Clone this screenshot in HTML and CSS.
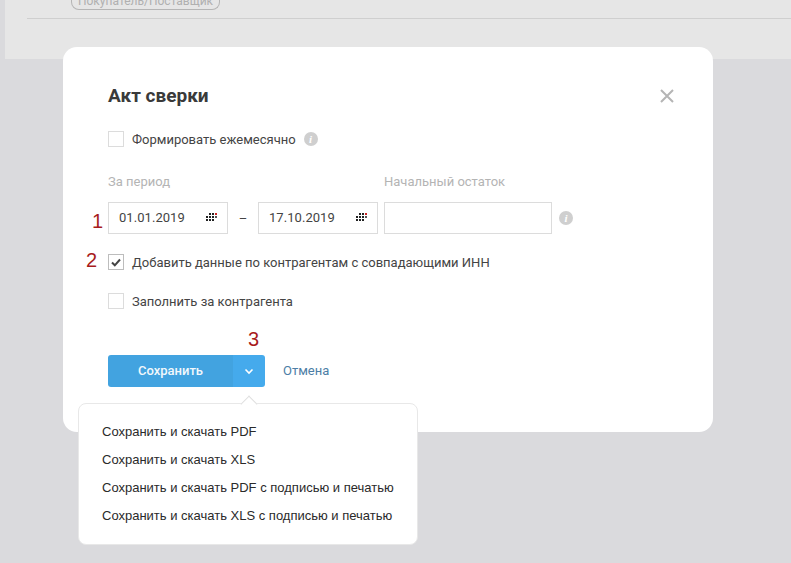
FILE: index.html
```html
<!DOCTYPE html>
<html lang="ru">
<head>
  <meta charset="UTF-8">
  <title>Акт сверки</title>
  <link rel="stylesheet" href="styles.css">
</head>
<body>

  <div class="backdrop">
    <div class="backdrop-row"><span class="pill">Покупатель/Поставщик</span></div>
  </div>

  <div class="modal">
    <h1>Акт сверки</h1>
    <svg class="close" width="14" height="14" viewBox="0 0 14 14"><path d="M1 1l12 12M13 1L1 13" stroke="#b5b5b5" stroke-width="2" fill="none"/></svg>

    <div class="check-row first">
      <span class="checkbox"></span>
      <span>Формировать ежемесячно</span>
      <span class="info">i</span>
    </div>

    <div class="period-labels">
      <span class="period-label">За период</span>
      <span class="period-label">Начальный остаток</span>
    </div>

    <div class="period-row">
      <div class="field date">
        01.01.2019
        <svg class="cal" width="11" height="9" viewBox="0 0 11 9"><path d="M3 0h2v2H3zM6 0h2v2H6zM0 3h2v2H0zM3 3h2v2H3zM6 3h2v2H6zM0 6h2v2H0zM3 6h2v2H3zM6 6h2v2H6z" fill="#222"/><path d="M9 0h2v2H9z" fill="#c22"/><path d="M9 3h2v2H9z" fill="#555"/></svg>
      </div>
      <span class="dash">–</span>
      <div class="field date">
        17.10.2019
        <svg class="cal" width="11" height="9" viewBox="0 0 11 9"><path d="M3 0h2v2H3zM6 0h2v2H6zM0 3h2v2H0zM3 3h2v2H3zM6 3h2v2H6zM0 6h2v2H0zM3 6h2v2H3zM6 6h2v2H6z" fill="#222"/><path d="M9 0h2v2H9z" fill="#c22"/><path d="M9 3h2v2H9z" fill="#555"/></svg>
      </div>
      <div class="field balance"></div>
      <span class="info">i</span>
    </div>

    <div class="check-row inn">
      <span class="checkbox checked">
        <svg width="10" height="9" viewBox="0 0 10 9"><path d="M1 4.5l2.8 2.8L9 1.5" stroke="#444" stroke-width="2" fill="none"/></svg>
      </span>
      <span>Добавить данные по контрагентам с совпадающими ИНН</span>
    </div>

    <div class="check-row fill">
      <span class="checkbox"></span>
      <span>Заполнить за контрагента</span>
    </div>

    <div class="actions">
      <div class="btn-save">Сохранить</div>
      <div class="btn-more">
        <svg width="10" height="7" viewBox="0 0 10 7"><path d="M1.5 1.5L5 5l3.5-3.5" stroke="#fff" stroke-width="1.6" fill="none"/></svg>
      </div>
      <span class="cancel">Отмена</span>
    </div>
  </div>

  <span class="mark mark-1">1</span>
  <span class="mark mark-2">2</span>
  <span class="mark mark-3">3</span>

  <div class="menu">
    <div class="menu-item">Сохранить и скачать PDF</div>
    <div class="menu-item">Сохранить и скачать XLS</div>
    <div class="menu-item">Сохранить и скачать PDF с подписью и печатью</div>
    <div class="menu-item">Сохранить и скачать XLS с подписью и печатью</div>
  </div>

</body>
</html>
```

FILE: styles.css
```css
* { margin: 0; padding: 0; box-sizing: border-box; }
html, body { height: 100%; overflow: hidden; }
body {
  font-family: Roboto, sans-serif;
  font-size: 13px;
  color: #444;
  background: #dadadd;
}

/* page behind the modal */
.backdrop {
  height: 59px;
  margin-left: 5px;
  padding-left: 22px;
  background: #e6e6e6;
}
.backdrop-row {
  height: 19px;
  border-bottom: 1px solid #cfcfcf;
  padding-left: 44px;
}
.pill {
  display: block;
  width: 149px;
  height: 10px;
  line-height: 2px;
  border: 1px solid #b5b5b5;
  border-top: none;
  border-radius: 0 0 8px 8px;
  overflow: hidden;
  font-size: 12px;
  color: #b0b0b0;
  text-align: center;
}

/* modal */
.modal {
  position: absolute;
  left: 63px;
  top: 47px;
  width: 650px;
  height: 385px;
  padding: 37px 45px 0;
  background: #fff;
  border-radius: 14px;
}
h1 {
  font-size: 19px;
  line-height: 24px;
  font-weight: 700;
  color: #3a3a3a;
}
.close {
  position: absolute;
  right: 39px;
  top: 42px;
}
.check-row {
  display: flex;
  align-items: center;
  gap: 8px;
  height: 18px;
}
.check-row.first { margin-top: 22px; }
.check-row.inn { margin-top: 19px; }
.check-row.fill { margin-top: 21px; }
.checkbox {
  display: flex;
  align-items: center;
  justify-content: center;
  width: 16px;
  height: 16px;
  border: 1px solid #dcdcdc;
}
.checkbox.checked { border-color: #bdbdbd; }
.info {
  width: 14px;
  height: 14px;
  border-radius: 50%;
  background: #cfcfcf;
  color: #fff;
  font: italic 700 11px/14px "Liberation Serif", serif;
  text-align: center;
}

.period-labels {
  display: flex;
  margin-top: 26px;
  height: 16px;
  line-height: 16px;
}
.period-label { color: #b4b4b4; }
.period-label:first-child { width: 276px; }

.period-row {
  display: flex;
  align-items: center;
  margin-top: 12px;
}
.field {
  height: 32px;
  border: 1px solid #dcdcdc;
}
.date {
  display: flex;
  align-items: center;
  justify-content: space-between;
  width: 120px;
  padding: 0 10px 1px;
  letter-spacing: 0.05px;
}
.dash { width: 30px; text-align: center; }
.balance { width: 168px; margin-left: 6px; margin-right: 7px; }

.actions {
  display: flex;
  align-items: center;
  margin-top: 45px;
}
.btn-save {
  width: 125px;
  height: 32px;
  line-height: 32px;
  background: #42a3e0;
  border-radius: 3px 0 0 3px;
  color: #f2f8fc;
  font-weight: 500;
  text-align: center;
}
.btn-more {
  display: flex;
  align-items: center;
  justify-content: center;
  width: 32px;
  height: 32px;
  background: #45aaec;
  border-radius: 0 3px 3px 0;
}
.cancel {
  margin-left: 18px;
  margin-bottom: 2px;
  color: #4c7ea6;
}

/* red notes drawn over the screenshot */
.mark {
  position: absolute;
  color: #a81c1c;
  font: 20px/24px "Liberation Sans", sans-serif;
}
.mark-1 { left: 92px; top: 209px; }
.mark-2 { left: 86px; top: 248px; }
.mark-3 { left: 248px; top: 327px; }

/* dropdown under the arrow button */
.menu {
  position: absolute;
  left: 78px;
  top: 403px;
  width: 340px;
  height: 142px;
  padding: 14px 23px;
  background: #fff;
  border: 1px solid #e8e8e8;
  border-radius: 8px;
  color: #2a2a2a;
  font-family: "Liberation Sans", sans-serif;
}
.menu::before {
  content: "";
  position: absolute;
  left: 164px;
  top: -6px;
  width: 11px;
  height: 11px;
  background: #fff;
  border-left: 1px solid #e0e0e0;
  border-top: 1px solid #e0e0e0;
  transform: rotate(45deg);
}
.menu-item { height: 28px; line-height: 28px; white-space: nowrap; }
```
